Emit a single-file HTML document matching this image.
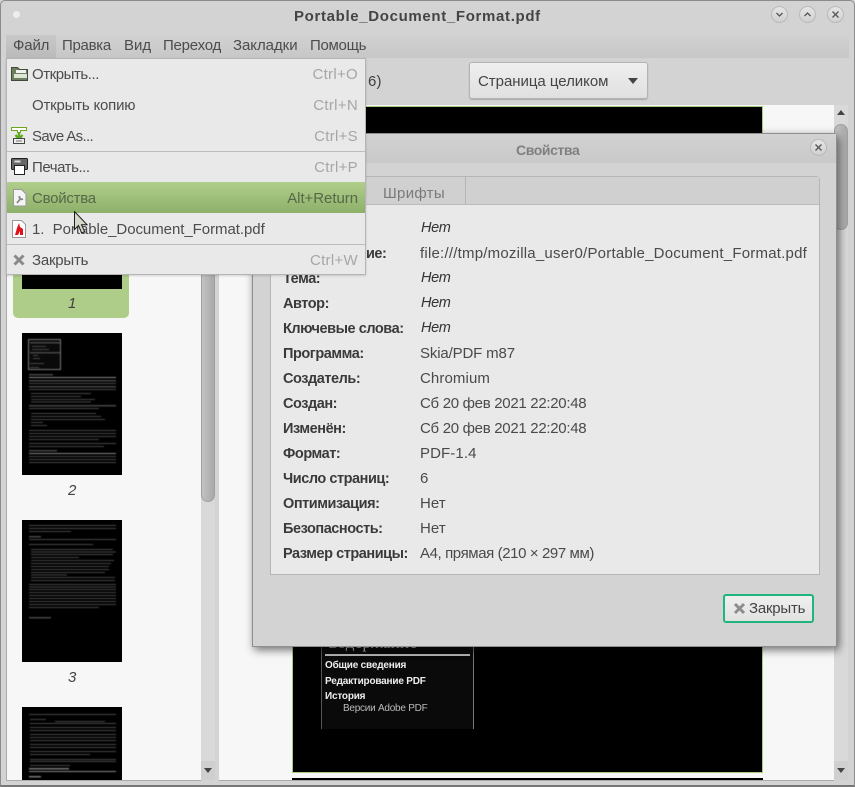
<!DOCTYPE html>
<html><head><meta charset="utf-8"><style>
html,body{margin:0;padding:0}
body{width:855px;height:787px;overflow:hidden;background:#d3d3d3;position:relative;font-family:"Liberation Sans","Noto Sans CJK SC",sans-serif;font-size:15px;color:#3f3f3f}
div,span,svg{position:absolute;box-sizing:border-box}
.t{white-space:nowrap;line-height:20px;height:20px;letter-spacing:.1px;margin-top:1px}
.m{color:#4c4c4c}
.s{color:#a6a6a6;text-align:right;left:238px;width:120px;letter-spacing:.3px}
.b{font-weight:bold;color:#3a3a3a;left:283px;letter-spacing:-.45px;font-size:14.5px}
.v{left:420px;color:#4a4a4a}
.i{font-style:italic;color:#333;left:421px;font-size:14.5px;letter-spacing:-.3px;margin-top:0}
.sep{left:0;width:100%;height:1px;background:#bdbdbd}
.wb{width:17px;height:17px;border-radius:50%;background:linear-gradient(#e6e6e6,#d0d0d0);border:1px solid #b9b9b9}
.th{filter:blur(.45px)}
.th g{fill:#464646}
</style></head><body>
<!-- window frame -->
<div style="left:0;top:0;width:855px;height:787px;background:#d3d3d3;border:1px solid #8b8b8b;border-bottom:2px solid #777;border-radius:5px 5px 0 0"></div>
<div style="left:6px;top:34px;width:843px;height:24px;background:linear-gradient(#d2d2d2,#c7c7c7)"></div>
<div style="left:13px;top:11px;width:7px;height:7px;border-radius:50%;background:#eee"></div>
<div class="t" style="left:294px;top:6px;font-weight:bold;color:#444;font-size:15px;letter-spacing:.66px">Portable_Document_Format.pdf</div>
<div class="wb" style="left:771px;top:6px"></div><div class="wb" style="left:799px;top:6px"></div><div class="wb" style="left:827px;top:6px"></div>
<svg style="left:771px;top:6px" width="73" height="17" fill="none" stroke="#555" stroke-width="1.3"><path d="M5.500 7l3 3 3-3M33.500 10l3-3 3 3M61.500 5.500l6 6M67.500 5.500l-6 6"/></svg>
<!-- menubar -->
<div style="left:6px;top:35px;width:50px;height:24px;background:linear-gradient(#c9c9c9,#b9b9b9)"></div>
<div class="t m" style="left:13px;top:35px;letter-spacing:-.15px">Файл</div>
<div class="t m" style="left:62px;top:35px;letter-spacing:-.3px">Правка</div>
<div class="t m" style="left:124px;top:35px;letter-spacing:0">Вид</div>
<div class="t m" style="left:163px;top:35px;letter-spacing:-.22px">Переход</div>
<div class="t m" style="left:233px;top:35px;letter-spacing:-.05px">Закладки</div>
<div class="t m" style="left:310px;top:35px;letter-spacing:-.3px">Помощь</div>
<!-- toolbar -->
<div class="t" style="left:368px;top:71px">6)</div>
<div style="left:469px;top:62px;width:179px;height:37px;border:1px solid #b2b2b2;border-radius:3px;background:linear-gradient(#efefef,#e0e0e0);box-shadow:0 1px 1px #aaa"></div>
<div class="t" style="left:478px;top:71px;color:#444;letter-spacing:-.03px">Страница целиком</div>
<svg style="left:628px;top:78px" width="11" height="7"><path d="M0 0h10L5 6z" fill="#444"/></svg>
<!-- sidebar -->
<div style="left:6px;top:58px;width:195px;height:723px;background:#f7f7f7;border-left:1px solid #aaa;border-bottom:1px solid #aaa"></div>
<div style="left:201px;top:58px;width:14px;height:722px;background:#d9d9d9"></div>
<div style="left:201px;top:200px;width:14px;height:302px;background:linear-gradient(90deg,#c2c2c2,#a9a9a9);border:1px solid #a0a0a0;border-radius:0 0 7px 7px"></div>
<div style="left:201px;top:761px;width:14px;height:19px;background:#cfcfcf"></div>
<svg style="left:203px;top:767px" width="10" height="7"><path d="M1 1h8L5 6z" fill="#444"/></svg>
<div style="left:13px;top:250px;width:116px;height:68px;background:#aecd89;border-radius:0 0 5px 5px"></div>
<div style="left:22px;top:250px;width:100px;height:39px;background:#000"></div>
<div class="t" style="left:68px;top:293px;font-style:italic;color:#444">1</div>
<div style="left:22px;top:333px;width:100px;height:142px;background:#000"></div>
<svg class="th" style="left:22px;top:333px" width="100" height="142"><rect x="6.500" y="6.500" width="32" height="30" fill="#0a0a0a" stroke="#777"/><rect x="7" y="44" width="87" height="1" fill="#888"/><rect x="7" y="120" width="87" height="1" fill="#888"/><g><rect x="8" y="9" width="30" height="1.500"/><rect x="10" y="13" width="14" height="1"/><rect x="10" y="16" width="17" height="1"/><rect x="8" y="19" width="30" height="1.500"/><rect x="11" y="22" width="5" height="1"/><rect x="11" y="25" width="7" height="1"/><rect x="8" y="30" width="14" height="1"/><rect x="8" y="34" width="9" height="1"/><rect x="7" y="41" width="24" height="1.500"/><rect x="7" y="47" width="87" height="1.500"/><rect x="7" y="50" width="87" height="1"/><rect x="7" y="53" width="87" height="1.500"/><rect x="7" y="56" width="87" height="1"/><rect x="9" y="60" width="60" height="1"/><rect x="9" y="63" width="50" height="1"/><rect x="9" y="66" width="64" height="1"/><rect x="9" y="68.500" width="60" height="1"/><rect x="7" y="72" width="87" height="1.500"/><rect x="7" y="75" width="70" height="1"/><rect x="9" y="80" width="65" height="1"/><rect x="9" y="83" width="70" height="1"/><rect x="9" y="86" width="74" height="1"/><rect x="9" y="89" width="12" height="1"/><rect x="9" y="92" width="16" height="1"/><rect x="7" y="97" width="87" height="1"/><rect x="7" y="100" width="87" height="1"/><rect x="7" y="103" width="87" height="1"/><rect x="7" y="106" width="70" height="1"/><rect x="7" y="110" width="87" height="1"/><rect x="7" y="113" width="75" height="1"/><rect x="7" y="117" width="28" height="1.500"/><rect x="7" y="123" width="87" height="1"/><rect x="7" y="126" width="87" height="1"/><rect x="7" y="129" width="87" height="1"/></g></svg>
<div class="t" style="left:68px;top:480px;font-style:italic;color:#444">2</div>
<div style="left:22px;top:520px;width:100px;height:142px;background:#000"></div>
<svg class="th" style="left:22px;top:520px" width="100" height="142"><g><rect x="7" y="5" width="87" height="1"/><rect x="7" y="8" width="87" height="1"/><rect x="7" y="11" width="42" height="1"/><rect x="7" y="16" width="12" height="1.500"/><rect x="7" y="19" width="87" height="1"/><rect x="7" y="24" width="64" height="1"/><rect x="9" y="29" width="82" height="1"/><rect x="9" y="31.500" width="85" height="1"/><rect x="9" y="34" width="82" height="1"/><rect x="9" y="37" width="48" height="1"/><rect x="9" y="40" width="83" height="1"/><rect x="9" y="43" width="80" height="1"/><rect x="9" y="46" width="78" height="1"/><rect x="9" y="49" width="78" height="1"/><rect x="9" y="52" width="74" height="1"/><rect x="9" y="54.500" width="36" height="1"/><rect x="9" y="57" width="84" height="1"/><rect x="9" y="60" width="84" height="1"/><rect x="7" y="64" width="87" height="1"/><rect x="7" y="66.500" width="87" height="1"/><rect x="7" y="69" width="87" height="1"/><rect x="7" y="72" width="87" height="1"/><rect x="7" y="75" width="87" height="1"/><rect x="7" y="78" width="87" height="1"/><rect x="7" y="81" width="87" height="1"/><rect x="7" y="84" width="87" height="1"/><rect x="7" y="87" width="70" height="1"/><rect x="7" y="97" width="22" height="1.500"/></g></svg>
<div class="t" style="left:68px;top:667px;font-style:italic;color:#444">3</div>
<div style="left:22px;top:707px;width:100px;height:73px;background:#000"></div>
<svg class="th" style="left:22px;top:707px" width="100" height="73"><g><rect x="7" y="7" width="87" height="1"/><rect x="8" y="12" width="16" height="1"/><rect x="33" y="14" width="50" height="1"/><rect x="8" y="16" width="86" height="1"/><rect x="8" y="20" width="86" height="1"/><rect x="8" y="23" width="86" height="1"/><rect x="8" y="27" width="86" height="1"/><rect x="8" y="30" width="86" height="1"/><rect x="8" y="33" width="86" height="1"/><rect x="8" y="37" width="86" height="1"/><rect x="8" y="40" width="86" height="1"/><rect x="8" y="44" width="86" height="1"/><rect x="8" y="47" width="60" height="1"/><rect x="8" y="52" width="86" height="1"/><rect x="8" y="54" width="86" height="1"/><rect x="8" y="58" width="40" height="1"/></g><rect x="7" y="64" width="87" height="1" fill="#888"/><rect x="7" y="61" width="40" height="1.500" fill="#777"/><rect x="7" y="69" width="12" height="1.500" fill="#777"/></svg>
<!-- main view -->
<div style="left:219px;top:105px;width:615px;height:676px;background:#f7f7f7;border-bottom:1px solid #aaa"></div>
<div style="left:292px;top:106px;width:471px;height:667px;background:#000;border:1px solid #a8cc7e"></div>
<div style="left:292px;top:778px;width:471px;height:2px;background:#000"></div>
<div style="left:321px;top:630px;width:153px;height:99px;background:#0a0a0a;border-left:1px solid #555;border-right:1px solid #777"></div>
<div class="t" style="left:326px;top:633px;font-family:'Liberation Serif',serif;font-size:17px;color:#bbb;letter-spacing:.2px;margin:0">Содержание</div>
<div style="left:325px;top:654px;width:145px;height:2px;background:#b5b5b5"></div>
<div class="t" style="left:325px;top:655px;font-size:10px;font-weight:bold;color:#eee;letter-spacing:-.2px">Общие сведения</div>
<div class="t" style="left:325px;top:671px;font-size:10px;font-weight:bold;color:#eee;letter-spacing:-.2px">Редактирование PDF</div>
<div class="t" style="left:325px;top:686px;font-size:10px;font-weight:bold;color:#eee;letter-spacing:-.2px">История</div>
<div class="t" style="left:343px;top:698px;font-size:10px;color:#bbb;letter-spacing:-.25px">Версии Adobe PDF</div>
<!-- main scrollbar -->
<div style="left:834px;top:105px;width:14px;height:675px;background:#d9d9d9"></div>
<div style="left:834px;top:124px;width:14px;height:106px;background:linear-gradient(90deg,#c2c2c2,#a9a9a9);border:1px solid #a0a0a0;border-radius:7px"></div>
<svg style="left:836px;top:109px" width="10" height="7"><path d="M1 6h8L5 1z" fill="#444"/></svg>
<div style="left:834px;top:761px;width:14px;height:19px;background:#cfcfcf"></div>
<svg style="left:836px;top:767px" width="10" height="7"><path d="M1 1h8L5 6z" fill="#444"/></svg>
<!-- dialog -->
<div style="left:252px;top:133px;width:585px;height:514px;background:#d3d3d3;border:1px solid #8f8f8f;border-radius:4px 4px 0 0;box-shadow:2px 3px 9px rgba(0,0,0,.55)"></div>
<div style="left:253px;top:134px;width:583px;height:29px;background:linear-gradient(#d2d2d2,#c9c9c9)"></div>
<div class="t" style="left:516px;top:139px;font-weight:bold;color:#7f7f7f;font-size:14px;letter-spacing:-.4px">Свойства</div>
<div class="wb" style="left:810px;top:139px"></div>
<svg style="left:810px;top:139px" width="17" height="17" fill="none" stroke="#555" stroke-width="1.300"><path d="M5.500 5.500l6 6M11.500 5.500l-6 6"/></svg>
<div style="left:270px;top:176px;width:550px;height:399px;background:#e9e9e9;border:1px solid #b5b5b5;border-radius:4px 4px 0 0"></div>
<div style="left:271px;top:177px;width:548px;height:28px;background:#d0d0d0;border-bottom:1px solid #bcbcbc"></div>
<div style="left:465px;top:177px;width:1px;height:28px;background:#b5b5b5"></div>
<div class="t" style="left:383px;top:183px;color:#7a7a7a;letter-spacing:.3px">Шрифты</div>
<div class="t i" style="top:218px">Нет</div>
<div class="t b" style="top:243px">Расположение:</div><div class="t v" style="top:243px;letter-spacing:.22px">file:///tmp/mozilla_user0/Portable_Document_Format.pdf</div>
<div class="t b" style="top:268px">Тема:</div><div class="t i" style="top:268px">Нет</div>
<div class="t b" style="top:293px">Автор:</div><div class="t i" style="top:293px">Нет</div>
<div class="t b" style="top:318px">Ключевые слова:</div><div class="t i" style="top:318px">Нет</div>
<div class="t b" style="top:343px">Программа:</div><div class="t v" style="top:343px;letter-spacing:-.15px">Skia/PDF m87</div>
<div class="t b" style="top:368px">Создатель:</div><div class="t v" style="top:368px;letter-spacing:.1px">Chromium</div>
<div class="t b" style="top:393px">Создан:</div><div class="t v" style="top:393px;letter-spacing:-.3px">Сб 20 фев 2021 22:20:48</div>
<div class="t b" style="top:418px">Изменён:</div><div class="t v" style="top:418px;letter-spacing:-.3px">Сб 20 фев 2021 22:20:48</div>
<div class="t b" style="top:443px">Формат:</div><div class="t v" style="top:443px">PDF-1.4</div>
<div class="t b" style="top:468px">Число страниц:</div><div class="t v" style="top:468px">6</div>
<div class="t b" style="top:493px">Оптимизация:</div><div class="t v" style="top:493px">Нет</div>
<div class="t b" style="top:518px">Безопасность:</div><div class="t v" style="top:518px">Нет</div>
<div class="t b" style="top:543px">Размер страницы:</div><div class="t v" style="top:543px;letter-spacing:-.4px">A4, прямая (210 × 297 мм)</div>
<div style="left:723px;top:594px;width:91px;height:29px;background:linear-gradient(#efefef,#e2e2e2);border:2px solid #1fb57e;border-radius:3px"></div>
<svg style="left:733px;top:602px" width="13" height="13" fill="none" stroke="#8d8d8d" stroke-width="3"><path d="M2 2l9 9M11 2l-9 9"/></svg>
<div class="t" style="left:749px;top:598px;color:#444;letter-spacing:-.22px">Закрыть</div>
<!-- menu -->
<div style="left:6px;top:58px;width:360px;height:217px;background:#e9e9e9;border:1px solid #b4b4b4;box-shadow:0 1px 2px rgba(0,0,0,.15)">
<div class="sep" style="top:92px"></div><div class="sep" style="top:185px"></div>
<div style="left:0;top:123px;width:358px;height:31px;background:linear-gradient(#afcf8a,#8eb069)"></div>
</div>
<svg style="left:11px;top:67px" width="17" height="14"><path d="M.5 .5h6l2 2h8v11H.5z" fill="#6e7f60" stroke="#3d4a35"/><rect x="5" y="3" width="10" height="3" fill="#f2f2f2"/><rect x="3" y="7" width="13" height="4" fill="#dfe6d6"/></svg>
<svg style="left:11px;top:127px" width="16" height="17"><path d="M.5.500h15v3H9.500v2h-3v-2H.5z" fill="#fff" stroke="#6da520"/><path d="M8 6v4M4.500 8l3.500 4 3.500-4" stroke="#5faa1c" stroke-width="2.400" fill="none"/><path d="M2.500 11.500h11v5h-11z" fill="#ededed" stroke="#444" stroke-width="1"/><path d="M5 14h6" stroke="#777"/></svg>
<svg style="left:11px;top:158px" width="17" height="17"><rect x=".5" y=".5" width="16" height="11" rx="1" fill="#666" stroke="#222"/><rect x="3.500" y="2.500" width="6" height="2" fill="#ddd"/><rect x="3.500" y="7.500" width="10" height="9" fill="#fff" stroke="#222"/></svg>
<svg style="left:12px;top:189px" width="15" height="18"><path d="M1.500.5h8l4.500 4.500v12h-12.500z" fill="#f4f4f4" stroke="#999"/><path d="M5 14l4-5m-1.500-2a2.500 2.500 0 003.500 3" stroke="#888" stroke-width="1.800" fill="none"/></svg>
<svg style="left:12px;top:220px" width="14" height="18"><path d="M.5.500h9l4 4v13h-13z" fill="#fff" stroke="#999"/><path d="M3 15l2-7 2-5 1 4 3 2v6H8v-4l-2 4z" fill="#e0121a"/></svg>
<svg style="left:13px;top:254px" width="12" height="12" fill="none" stroke="#8a8a8a" stroke-width="3"><path d="M1.500 1.500l9 9M10.500 1.500l-9 9"/></svg>
<div class="t m" style="left:32px;top:64px;letter-spacing:-.45px">Открыть...</div><div class="t s" style="top:64px">Ctrl+O</div>
<div class="t m" style="left:32px;top:95px;letter-spacing:-.2px">Открыть копию</div><div class="t s" style="top:95px">Ctrl+N</div>
<div class="t m" style="left:32px;top:126px;letter-spacing:-.65px">Save As...</div><div class="t s" style="top:126px">Ctrl+S</div>
<div class="t m" style="left:32px;top:157px;letter-spacing:-.45px">Печать...</div><div class="t s" style="top:157px">Ctrl+P</div>
<div class="t" style="left:32px;top:188px;color:#566848;letter-spacing:-.25px">Свойства</div><div class="t" style="left:238px;width:120px;text-align:right;top:188px;color:#566848;letter-spacing:-.05px">Alt+Return</div>
<div class="t m" style="left:32px;top:219px;letter-spacing:-.05px">1.&nbsp; Portable_Document_Format.pdf</div>
<div class="t m" style="left:32px;top:250px;letter-spacing:-.22px">Закрыть</div><div class="t s" style="top:250px">Ctrl+W</div>
<!-- cursor -->
<svg style="left:74px;top:211px" width="14" height="25"><path d="M.5.500v18l4-4 3.200 7.500 3-1.300-3.200-7h5.500z" fill="#d4d8c8" stroke="#1c1c1c"/></svg>
</body></html>
